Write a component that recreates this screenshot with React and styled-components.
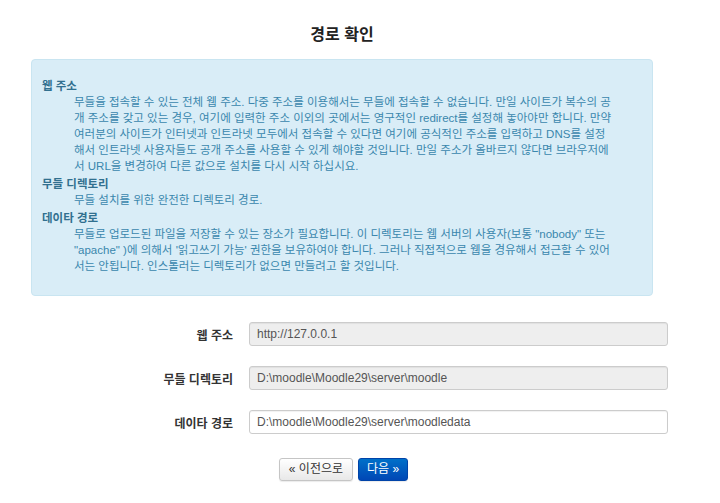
import styled, { createGlobalStyle } from 'styled-components';

const GlobalStyle = createGlobalStyle`
  body {
    margin: 0;
    background: #fff;
    font-family: "Liberation Sans", "Noto Sans CJK KR", sans-serif;
  }
`

let Page = styled.div`
  width: 720px;
  height: 503px;
  overflow: hidden;
`

let Container = styled.div`
  width: 622px;
  margin-left: 31px;
`

let Title = styled.h2`
  margin: 0;
  padding-top: 24px;
  height: 35px;
  font-size: 16px;
  line-height: 22px;
  font-weight: bold;
  text-align: center;
  color: #222;
`

// 파란색 안내 상자
let InfoBox = styled.dl`
  margin: 0;
  padding: 18px 10px 20px 10px;
  height: 237px;
  box-sizing: border-box;
  background-color: #d9edf7;
  border: 1px solid #c9e5f1;
  border-radius: 4px;
  font-size: 11.5px;
  line-height: 16px;
`

let Term = styled.dt`
  font-weight: bold;
  color: #31708f;
`

let Desc = styled.dd`
  margin: 0 0 2px 32px;
  color: #3a87ad;
  white-space: nowrap;
`

let Form = styled.div`
  margin-top: 26px;
  display: flex;
  flex-direction: column;
  gap: 20px;
`

let Row = styled.div`
  display: flex;
  align-items: center;
`

let Label = styled.label`
  flex: 0 0 202px;
  text-align: right;
  font-size: 12px;
  font-weight: bold;
  color: #333;
`

let Input = styled.input`
  flex: 0 0 419px;
  margin-left: 16px;
  height: 24px;
  box-sizing: border-box;
  padding: 0 7px;
  border: 1px solid #ccc;
  border-radius: 3px;
  background-color: ${props => props.readOnly ? '#eeeeee' : '#fff'};
  box-shadow: inset 0 1px 1px rgba(0, 0, 0, 0.06);
  font-family: "Liberation Sans", sans-serif;
  font-size: 12px;
  color: #555;
`

let Buttons = styled.div`
  margin-top: 24px;
  display: flex;
  justify-content: center;
  gap: 5px;
  padding-left: 3px;
`

let Button = styled.button`
  height: 23px;
  padding: 0 ${props => props.primary ? '8px' : '9px'};
  border-radius: 3px;
  font-family: "Liberation Sans", "Noto Sans CJK KR", sans-serif;
  font-size: 12px;
  line-height: 21px;
  cursor: pointer;
  border: 1px solid ${props => props.primary ? '#0043a8' : '#c5c5c5'};
  color: ${props => props.primary ? '#fff' : '#333'};
  background: ${props => props.primary
    ? 'linear-gradient(#0070c9, #0047b5)'
    : 'linear-gradient(#ffffff, #e8e8e8)'};
  box-shadow: 0 1px 1px rgba(0, 0, 0, 0.08);
`

function App() {
    return (
        <Page>
            <GlobalStyle/>
            <Container>
                <Title>경로 확인</Title>
                <InfoBox>
                    <Term>웹 주소</Term>
                    <Desc>
                        무들을 접속할 수 있는 전체 웹 주소. 다중 주소를 이용해서는 무들에 접속할 수 없습니다. 만일 사이트가 복수의 공<br/>
                        개 주소를 갖고 있는 경우, 여기에 입력한 주소 이외의 곳에서는 영구적인 redirect를 설정해 놓아야만 합니다. 만약<br/>
                        여러분의 사이트가 인터넷과 인트라넷 모두에서 접속할 수 있다면 여기에 공식적인 주소를 입력하고 DNS를 설정<br/>
                        해서 인트라넷 사용자들도 공개 주소를 사용할 수 있게 해야할 것입니다. 만일 주소가 올바르지 않다면 브라우저에<br/>
                        서 URL을 변경하여 다른 값으로 설치를 다시 시작 하십시요.
                    </Desc>
                    <Term>무들 디렉토리</Term>
                    <Desc>무들 설치를 위한 완전한 디렉토리 경로.</Desc>
                    <Term>데이타 경로</Term>
                    <Desc>
                        무들로 업로드된 파일을 저장할 수 있는 장소가 필요합니다. 이 디렉토리는 웹 서버의 사용자(보통 "nobody" 또는<br/>
                        "apache" )에 의해서 '읽고쓰기 가능' 권한을 보유하여야 합니다. 그러나 직접적으로 웹을 경유해서 접근할 수 있어<br/>
                        서는 안됩니다. 인스톨러는 디렉토리가 없으면 만들려고 할 것입니다.
                    </Desc>
                </InfoBox>

                <Form>
                    <Row>
                        <Label>웹 주소</Label>
                        <Input readOnly value="http://127.0.0.1"/>
                    </Row>
                    <Row>
                        <Label>무들 디렉토리</Label>
                        <Input readOnly value="D:\moodle\Moodle29\server\moodle"/>
                    </Row>
                    <Row>
                        <Label>데이타 경로</Label>
                        <Input defaultValue="D:\moodle\Moodle29\server\moodledata"/>
                    </Row>
                </Form>

                <Buttons>
                    <Button>« 이전으로</Button>
                    <Button primary>다음 »</Button>
                </Buttons>
            </Container>
        </Page>
    )
}

export default App;
